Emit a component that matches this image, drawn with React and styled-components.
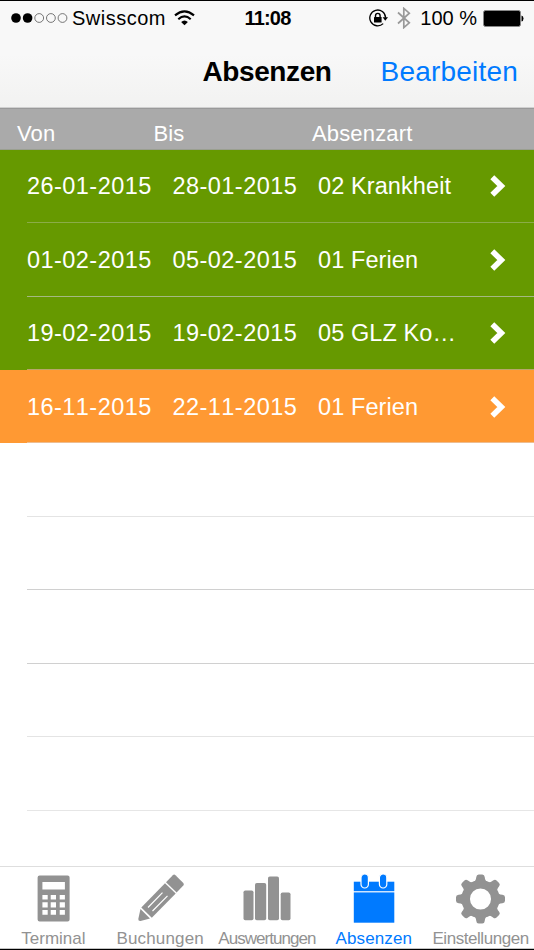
import styled, { createGlobalStyle } from "styled-components";

const GlobalStyle = createGlobalStyle`
  * {
    box-sizing: border-box;
  }

  body {
    margin: 0;
    background-color: #fff;
    font-family: "Liberation Sans", Arial, sans-serif;
  }
`;

const Screen = styled.div`
  display: flex;
  flex-direction: column;
  width: 534px;
  height: 950px;
  overflow: hidden;
  border-top: 1px solid #000;
  border-bottom: 1px solid #000;
  background-color: #fff;
`;

const TopArea = styled.header`
  flex: none;
  height: 107px;
  background: linear-gradient(#f8f8f8 50%, #f2f2f1);
  border-bottom: 1px solid #d0d0d0;
`;

const StatusBar = styled.div`
  display: grid;
  grid-template-columns: 1fr auto 1fr;
  align-items: center;
  height: 34px;
  padding: 0 10px 0 11px;
  font-size: 20px;
`;

const StatusLeft = styled.div`
  display: flex;
  align-items: center;
`;

const StatusRight = styled.div`
  display: flex;
  align-items: center;
  justify-content: flex-end;
`;

const StatusIcons = styled.div`
  display: flex;
  align-items: center;
  gap: 8px;
`;

const Carrier = styled.span`
  margin: 1px 8px 0 4px;
  letter-spacing: 0.5px;
`;

const Clock = styled.span`
  margin-top: 1px;
  font-weight: bold;
  letter-spacing: -0.8px;
`;

const Battery = styled.span`
  margin: 1px 6px 0 9px;
  white-space: nowrap;
`;

const NavBar = styled.div`
  display: grid;
  grid-template-columns: 1fr auto 1fr;
  align-items: center;
  height: 72px;
  padding: 1px 16px 0;
`;

const NavTitle = styled.h1`
  grid-column: 2;
  margin: 0;
  font-size: 28px;
  line-height: 34px;
  letter-spacing: -0.4px;
`;

const NavAction = styled.span`
  justify-self: end;
  color: #007aff;
  font-size: 28px;
  line-height: 34px;
  letter-spacing: 0.2px;
`;

const ColumnHeader = styled.div`
  flex: none;
  display: grid;
  grid-template-columns: 136.5px 158.5px 1fr;
  height: 41.65px;
  padding: 12px 0 0 17px;
  border-top: 1px solid #999;
  border-bottom: 1px solid #9a9f90;
  background-color: #aaa;
  color: #fff;
  font-size: 22px;
  line-height: 26px;
  letter-spacing: 0.15px;
`;

const List = styled.main`
  flex: 1;
  overflow: hidden;
`;

const Row = styled.div`
  height: 73.45px;
  padding-left: 27px;
  background-color: ${(props) => props.$color || "#fff"};
`;

const RowContent = styled.div`
  display: grid;
  grid-template-columns: 145.5px 145.5px 145px 1fr;
  align-items: center;
  height: 100%;
  padding-top: 1px;
  border-bottom: 1px solid ${(props) => props.$line};
  color: #fff;
`;

const Cell = styled.span`
  padding-top: 1px;
  font-size: 23.5px;
  font-kerning: none;
  letter-spacing: 0.45px;
  white-space: nowrap;
`;

const TypeCell = styled(Cell)`
  letter-spacing: 0.1px;
`;

const Chevron = styled.svg`
  display: block;
  margin-left: 27px;
`;

const TabBar = styled.nav`
  flex: none;
  display: grid;
  grid-template-columns: repeat(5, 1fr);
  height: 83px;
  border-top: 1px solid #dedede;
  border-bottom: 1px solid #c4c4c4;
  background-color: #fff;
`;

const Tab = styled.div`
  display: flex;
  flex-direction: column;
  align-items: center;
  color: ${(props) => (props.$active ? "#007aff" : "#929292")};
`;

const TabIcon = styled.svg`
  flex: none;
  display: block;
  margin-top: 5px;
`;

const TabLabel = styled.span`
  margin-top: 3px;
  font-size: 17px;
  line-height: 20px;
  white-space: nowrap;
  letter-spacing: ${(props) => props.$spacing}px;
`;

const signalSVG = (
  <svg width="57" height="12" viewBox="0 0 57 12">
    <circle cx="5" cy="6" r="4.8" />
    <circle cx="16.6" cy="6" r="4.8" />
    <g fill="none" stroke="#555" strokeWidth="0.8">
      <circle cx="28.2" cy="6" r="4.4" />
      <circle cx="39.9" cy="6" r="4.4" />
      <circle cx="51.5" cy="6" r="4.4" />
    </g>
  </svg>
);

const wifiSVG = (
  <svg width="21" height="16" viewBox="0 0 21 16">
    <g fill="none" stroke="#000" strokeWidth="2.2">
      <path d="M1 5.4Q10.5 -2.6 20 5.4" />
      <path d="M4.3 9.2Q10.5 3.7 16.7 9.2" />
    </g>
    <path d="M10.5 15.3L7.1 12Q10.5 9 13.9 12Z" />
  </svg>
);

const rotationLockSVG = (
  <svg width="20" height="18" viewBox="0 0 20 18">
    <path
      d="M14.2 14.6A7.9 7.9 0 1 1 16.6 8.7"
      fill="none"
      stroke="#000"
      strokeWidth="1.3"
    />
    <path d="M13.6 8.3H19L16.3 11.8Z" />
    <rect x="5" y="8" width="7.6" height="5.4" rx="0.5" />
    <path
      d="M6.5 8.5V6.7a2.3 2.3 0 0 1 4.6 0V8.5"
      fill="none"
      stroke="#000"
      strokeWidth="1.4"
    />
  </svg>
);

const bluetoothSVG = (
  <svg width="14" height="22" viewBox="0 0 14 22">
    <path
      d="M1 5.5L12.3 15.8L6.8 20.6V1.4L12.3 6.2L1 16.5"
      fill="none"
      stroke="#999"
      strokeWidth="1.7"
    />
  </svg>
);

const batterySVG = (
  <svg width="41" height="17" viewBox="0 0 41 17">
    <rect
      x="0.5"
      y="0.5"
      width="37"
      height="16"
      rx="2"
      fill="#000"
      stroke="#888"
    />
    <path d="M38.5 5.5Q40.5 6 40.5 8.5T38.5 11.5Z" />
  </svg>
);

const chevronSVG = (
  <Chevron width="16" height="22" viewBox="0 0 16 22">
    <path
      d="M2.3 2.3L11.3 11L2.3 19.7"
      fill="none"
      stroke="#fff"
      strokeWidth="5.6"
    />
  </Chevron>
);

const calculatorSVG = (
  <TabIcon width="50" height="54" viewBox="0 0 50 54">
    <path
      fill="currentColor"
      fillRule="evenodd"
      d="M4 4.5H32Q34 4.5 34 6.5V48.5Q34 50.5 32 50.5H4Q2 50.5 2 48.5V6.5Q2 4.5 4 4.5Z
        M6.8 11V18.5H29.3V11Z
        M6.8 24V28.5H12.1V24ZM15.1 24V28.5H20.4V24ZM24.1 24V28.5H29.3V24Z
        M6.8 31.2V36.5H12.1V31.2ZM15.1 31.2V36.5H20.4V31.2ZM24.1 31.2V36.5H29.3V31.2Z
        M6.8 39V43.7H12.1V39ZM15.1 39V43.7H20.4V39ZM24.1 39V43.7H29.3V39Z"
      transform="translate(7.6 -1)"
    />
  </TabIcon>
);

const pencilSVG = (
  <TabIcon width="50" height="54" viewBox="0 0 50 54">
    <g fill="currentColor">
      <path d="M5.5 36.9L15 46.6L5.5 49.1Q3.1 49.3 3.3 47Z" />
      <path d="M6.3 35.5L30 11.2L40.7 21.6L16.8 45.7Z" />
      <path d="M31 10.2L37.8 3.2Q39.1 2 40.5 3.2L48.300 10.900Q49.500 12.200 48.300 13.600L41.600 20.600Z" />
    </g>
    <path
      d="M13 35.5L27.500 20.600M17.500 39L32.500 23.800"
      stroke="#fff"
      strokeWidth="1.200"
      fill="none"
    />
  </TabIcon>
);

const barsSVG = (
  <TabIcon width="50" height="54" viewBox="0 0 50 54">
    <g fill="currentColor">
      <rect x="1.5" y="18.5" width="10" height="29.8" rx="1.8" />
      <rect x="13" y="11" width="11.2" height="37.3" rx="1.8" />
      <rect x="26" y="4.5" width="11" height="43.8" rx="1.8" />
      <rect x="38.7" y="20.5" width="9.8" height="27.8" rx="1.8" />
    </g>
  </TabIcon>
);

const calendarSVG = (
  <TabIcon width="50" height="54" viewBox="0 0 50 54">
    <g fill="currentColor">
      <rect x="4.8" y="9.7" width="40.5" height="9.5" />
      <rect x="4.8" y="20.4" width="40.5" height="30.3" />
      <g stroke="#fff" strokeWidth="1.2">
        <rect x="12" y="2" width="7.4" height="14" rx="3.7" />
        <rect x="30.4" y="2" width="7.4" height="14" rx="3.7" />
      </g>
    </g>
  </TabIcon>
);

const gearAngles = [0, 45, 90, 135, 180, 225, 270, 315];

const gearSVG = (
  <TabIcon width="50" height="54" viewBox="0 0 50 54">
    <circle
      cx="24.5"
      cy="27"
      r="14.8"
      fill="none"
      stroke="currentColor"
      strokeWidth="8.5"
    />
    {gearAngles.map((angle) => (
      <path
        key={angle}
        d="M16.5 11Q20 9.5 20.3 5.1Q20.5 2.5 22.7 2.5H26.3Q28.5 2.5 28.7 5.1Q29 9.5 32.5 11Z"
        fill="currentColor"
        transform={`rotate(${angle} 24.5 27)`}
      />
    ))}
  </TabIcon>
);

const green = "#669900";
const orange = "#ff9933";

const absences = [
  { from: "26-01-2015", to: "28-01-2015", type: "02 Krankheit", color: green, line: "#8bac48" },
  { from: "01-02-2015", to: "05-02-2015", type: "01 Ferien", color: green, line: "#a5b982" },
  { from: "19-02-2015", to: "19-02-2015", type: "05 GLZ Ko…", color: green, line: "#b9a66c" },
  { from: "16-11-2015", to: "22-11-2015", type: "01 Ferien", color: orange, line: "#edbd91" },
];

const emptyRowLines = ["#e4e4e4", "#d0d0d0", "#d0d0d0", "#e4e4e4", "#e6e6e6", "#e4e4e4"];

const tabs = [
  { label: "Terminal", icon: calculatorSVG, spacing: 0 },
  { label: "Buchungen", icon: pencilSVG, spacing: 0.15 },
  { label: "Auswertungen", icon: barsSVG, spacing: -0.95 },
  { label: "Absenzen", icon: calendarSVG, spacing: 0.1, active: true },
  { label: "Einstellungen", icon: gearSVG, spacing: -0.45 },
];

function App() {
  return (
    <>
      <GlobalStyle />
      <Screen>
        <TopArea>
          <StatusBar>
            <StatusLeft>
              {signalSVG}
              <Carrier>Swisscom</Carrier>
              {wifiSVG}
            </StatusLeft>
            <Clock>11:08</Clock>
            <StatusRight>
              <StatusIcons>
                {rotationLockSVG}
                {bluetoothSVG}
              </StatusIcons>
              <Battery>100 %</Battery>
              {batterySVG}
            </StatusRight>
          </StatusBar>
          <NavBar>
            <NavTitle>Absenzen</NavTitle>
            <NavAction>Bearbeiten</NavAction>
          </NavBar>
        </TopArea>
        <ColumnHeader>
          <span>Von</span>
          <span>Bis</span>
          <span>Absenzart</span>
        </ColumnHeader>
        <List>
          {absences.map((absence) => (
            <Row key={absence.from} $color={absence.color}>
              <RowContent $line={absence.line}>
                <Cell>{absence.from}</Cell>
                <Cell>{absence.to}</Cell>
                <TypeCell>{absence.type}</TypeCell>
                {chevronSVG}
              </RowContent>
            </Row>
          ))}
          {emptyRowLines.map((line, index) => (
            <Row key={index}>
              <RowContent $line={line} />
            </Row>
          ))}
        </List>
        <TabBar>
          {tabs.map((tab) => (
            <Tab key={tab.label} $active={tab.active}>
              {tab.icon}
              <TabLabel $spacing={tab.spacing}>{tab.label}</TabLabel>
            </Tab>
          ))}
        </TabBar>
      </Screen>
    </>
  );
}

export default App;
